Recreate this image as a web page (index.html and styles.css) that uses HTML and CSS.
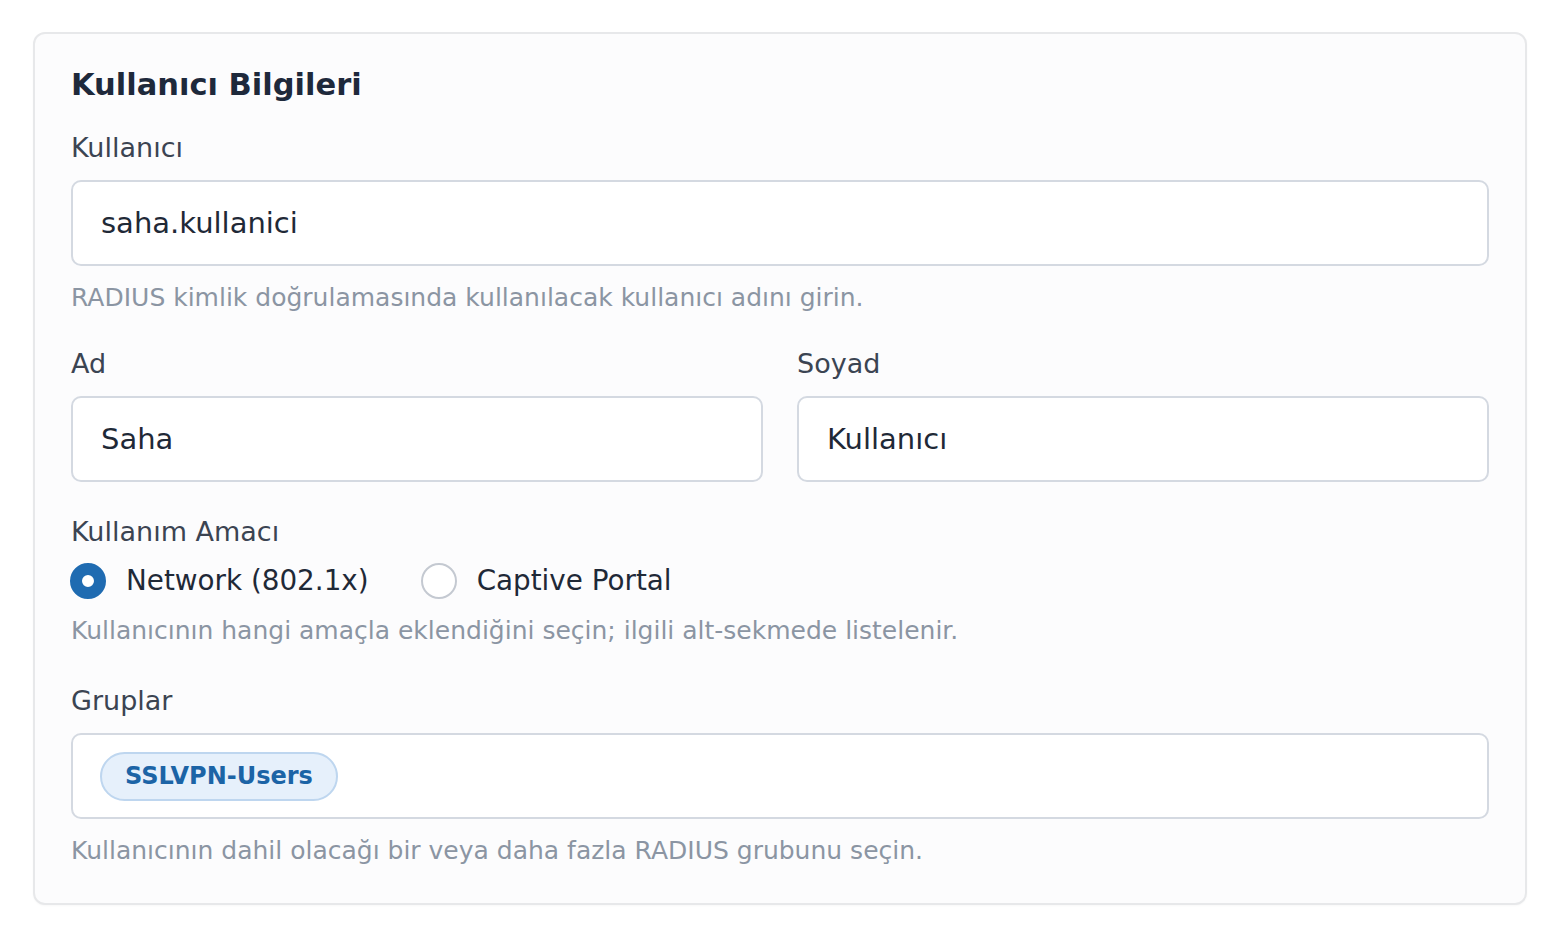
FILE: index.html
```html
<!DOCTYPE html>
<html lang="tr">
<head>
<meta charset="utf-8">
<title>Kullanıcı Bilgileri</title>
<link rel="stylesheet" href="styles.css">
</head>
<body>
<main class="page">
  <section class="card">
    <h2 class="card-title">Kullanıcı Bilgileri</h2>

    <div class="field">
      <label class="field-label" for="username">Kullanıcı</label>
      <input class="text-input" id="username" type="text" value="saha.kullanici">
      <p class="field-hint">RADIUS kimlik doğrulamasında kullanılacak kullanıcı adını girin.</p>
    </div>

    <div class="field-row">
      <div class="field">
        <label class="field-label" for="first-name">Ad</label>
        <input class="text-input" id="first-name" type="text" value="Saha">
      </div>
      <div class="field">
        <label class="field-label" for="last-name">Soyad</label>
        <input class="text-input" id="last-name" type="text" value="Kullanıcı">
      </div>
    </div>

    <div class="field">
      <span class="field-label">Kullanım Amacı</span>
      <div class="radio-group">
        <label class="radio">
          <span class="radio-mark is-checked"></span>
          <span class="radio-text">Network (802.1x)</span>
        </label>
        <label class="radio">
          <span class="radio-mark"></span>
          <span class="radio-text">Captive Portal</span>
        </label>
      </div>
      <p class="field-hint">Kullanıcının hangi amaçla eklendiğini seçin; ilgili alt-sekmede listelenir.</p>
    </div>

    <div class="field field-groups">
      <span class="field-label">Gruplar</span>
      <div class="tag-input">
        <span class="tag">SSLVPN-Users</span>
      </div>
      <p class="field-hint">Kullanıcının dahil olacağı bir veya daha fazla RADIUS grubunu seçin.</p>
    </div>
  </section>
</main>
</body>
</html>
```

FILE: styles.css
```css
* {
  box-sizing: border-box;
}

html,
body {
  margin: 0;
  background: #ffffff;
}

body {
  font-family: "DejaVu Sans", "Noto Sans", sans-serif;
  color: #1f2937;
}

.page {
  padding: 32px 33px;
}

/* Card stacks its sections as a flex column so spacing never collapses */
.card {
  display: flex;
  flex-direction: column;
  background: #fcfcfd;
  border: 2px solid #e7e8ea;
  border-radius: 12px;
  padding: 33px 36px 37px;
  box-shadow: 0 1px 2px rgba(16, 24, 40, 0.03);
}

.card-title {
  margin: 0 0 29px;
  font-size: 30.5px;
  line-height: 36px;
  font-weight: 700;
  color: #1e293b;
}

.field {
  display: flex;
  flex-direction: column;
  margin-bottom: 35px;
}

.field:last-child {
  margin-bottom: 0;
}

.field-row {
  display: grid;
  grid-template-columns: 1fr 1fr;
  column-gap: 34px;
}

.field-row .field {
  margin-bottom: 34px;
}

.field-label {
  font-size: 27px;
  line-height: 32px;
  color: #3b4452;
  margin-bottom: 16px;
}

.text-input {
  display: block;
  width: 100%;
  height: 86px;
  padding: 0 28px;
  border: 2px solid #d4d9e1;
  border-radius: 10px;
  background: #ffffff;
  font-family: inherit;
  font-size: 29px;
  color: #1f2937;
  outline: none;
}

.field-hint {
  margin: 17px 0 0;
  font-size: 25px;
  line-height: 30px;
  color: #8b95a3;
}

.radio-group {
  display: flex;
  align-items: center;
  gap: 52px;
  margin-top: -1px;
  margin-left: -1px;
}

.radio {
  display: flex;
  align-items: center;
  gap: 20px;
  height: 36px;
}

.radio-mark {
  width: 36px;
  height: 36px;
  border-radius: 50%;
  border: 2px solid #c4c9d1;
  background: #ffffff;
  flex: none;
}

.radio-mark.is-checked {
  border: 12px solid #1f6bb1;
  background: #ffffff;
}

.radio-text {
  font-size: 27.8px;
  line-height: 36px;
  color: #1f2937;
}

.field-groups {
  margin-top: 4px;
}

.tag-input {
  display: flex;
  align-items: center;
  height: 86px;
  padding: 0 27px;
  border: 2px solid #d4d9e1;
  border-radius: 10px;
  background: #ffffff;
}

.tag {
  display: inline-flex;
  align-items: center;
  height: 49px;
  padding: 0 23px;
  border: 2px solid #bed6ef;
  border-radius: 25px;
  background: #e6f0fb;
  font-size: 24px;
  font-weight: 700;
  color: #1c64a6;
}
```
